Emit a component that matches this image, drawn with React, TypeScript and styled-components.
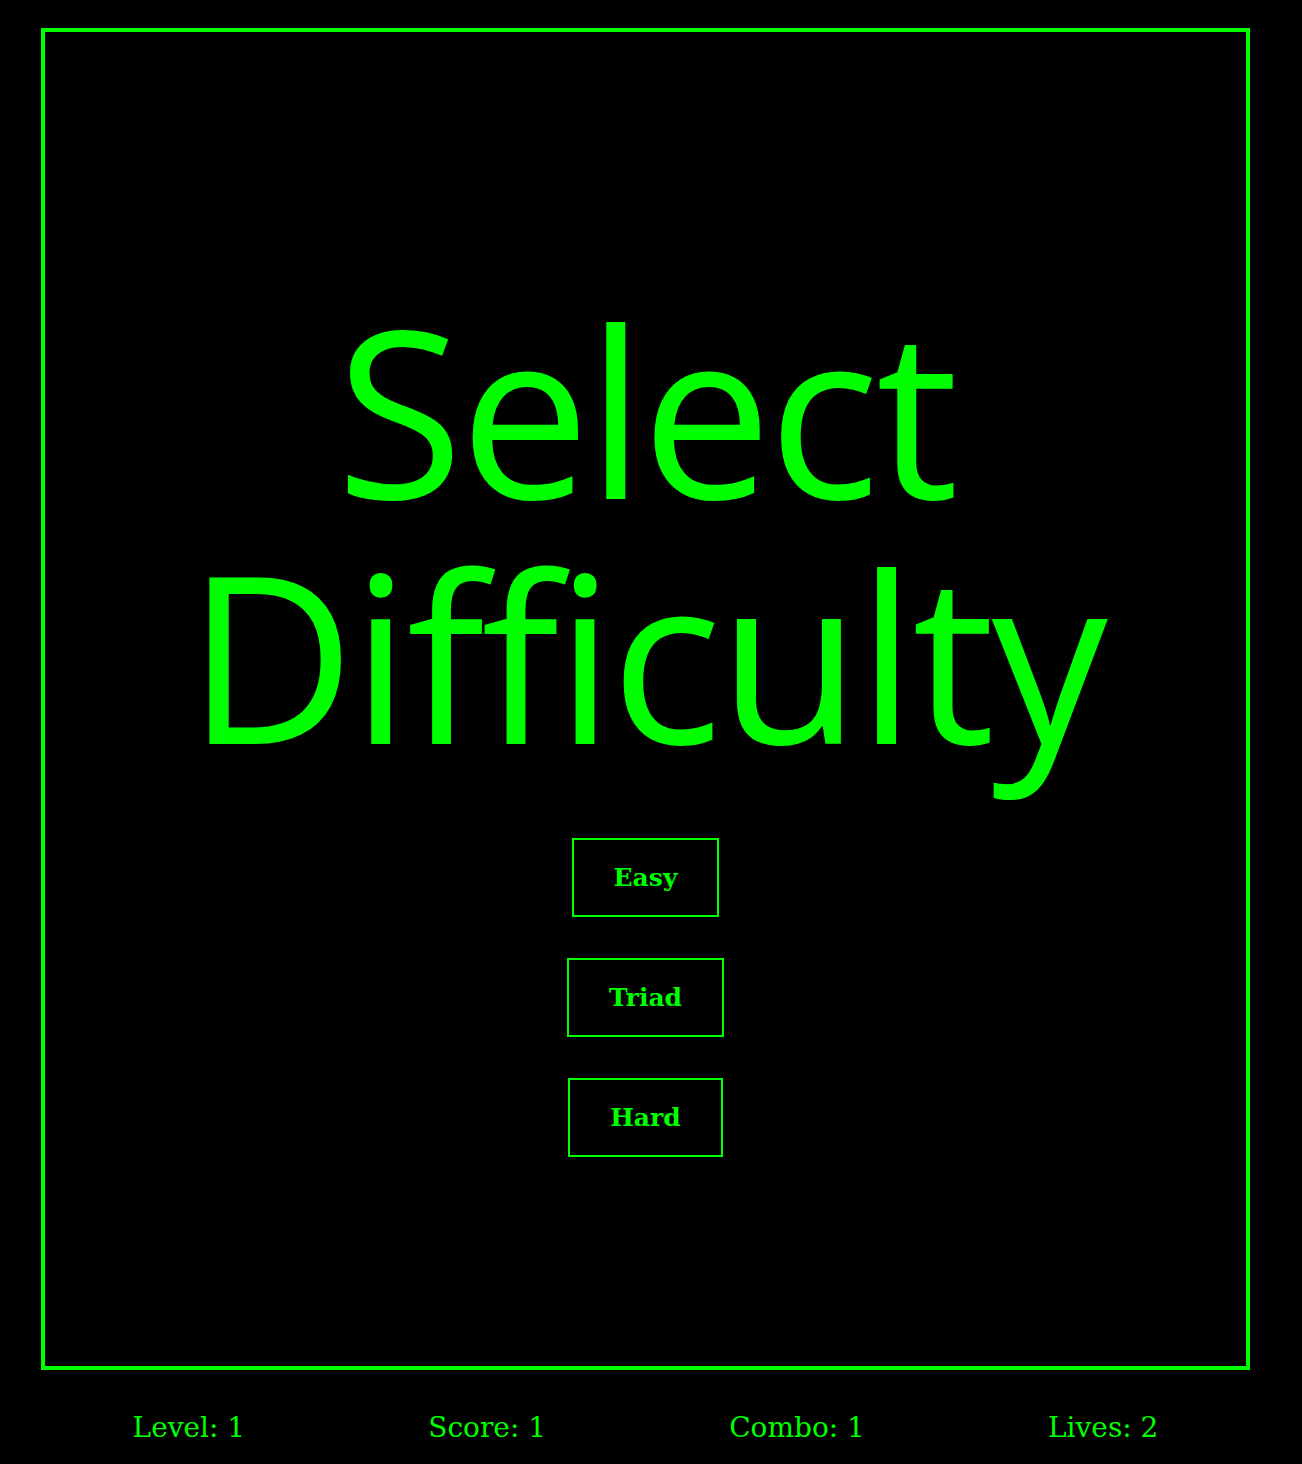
import React from "react";
import styled, { createGlobalStyle } from "styled-components";

const Global = createGlobalStyle`
  html, body { margin: 0; padding: 0; background: #000; }
  body { font-family: "DejaVu Serif", serif; color: #00ff00; }
`;

const Page = styled.div`
  width: 1209px;
  margin-left: 41px;
  padding-top: 28px;
`;

const Frame = styled.main`
  box-sizing: border-box;
  height: 1342px;
  border: 4px solid #00ff00;
  padding-top: 255px;
  display: flex;
  flex-direction: column;
  align-items: center;
`;

const Title = styled.h1`
  margin: 0 0 61px;
  font-family: "Open Sans", sans-serif;
  font-weight: 400;
  font-size: 232px;
  line-height: 245px;
  letter-spacing: -3.5px;
  text-align: center;
  color: #00ff00;
`;

const Buttons = styled.div`
  display: flex;
  flex-direction: column;
  align-items: center;
  gap: 41px;
`;

const Choice = styled.button`
  background: transparent;
  border: 2px solid #00ff00;
  color: #00ff00;
  font-family: "DejaVu Serif", serif;
  font-weight: 700;
  font-size: 25px;
  line-height: 29px;
  padding: 23px 40px;
  cursor: pointer;
`;

const Footer = styled.footer`
  display: flex;
  justify-content: space-around;
  padding-top: 41px;
`;

const Stat = styled.span`
  font-family: "DejaVu Serif", serif;
  font-size: 28px;
  color: #00ff00;
`;

export default function App() {
  return (
    <>
      <Global />
      <Page>
        <Frame>
          <Title>Select Difficulty</Title>
          <Buttons>
            <Choice>Easy</Choice>
            <Choice>Triad</Choice>
            <Choice>Hard</Choice>
          </Buttons>
        </Frame>
        <Footer>
          <Stat>Level: 1</Stat>
          <Stat>Score: 1</Stat>
          <Stat>Combo: 1</Stat>
          <Stat>Lives: 2</Stat>
        </Footer>
      </Page>
    </>
  );
}
